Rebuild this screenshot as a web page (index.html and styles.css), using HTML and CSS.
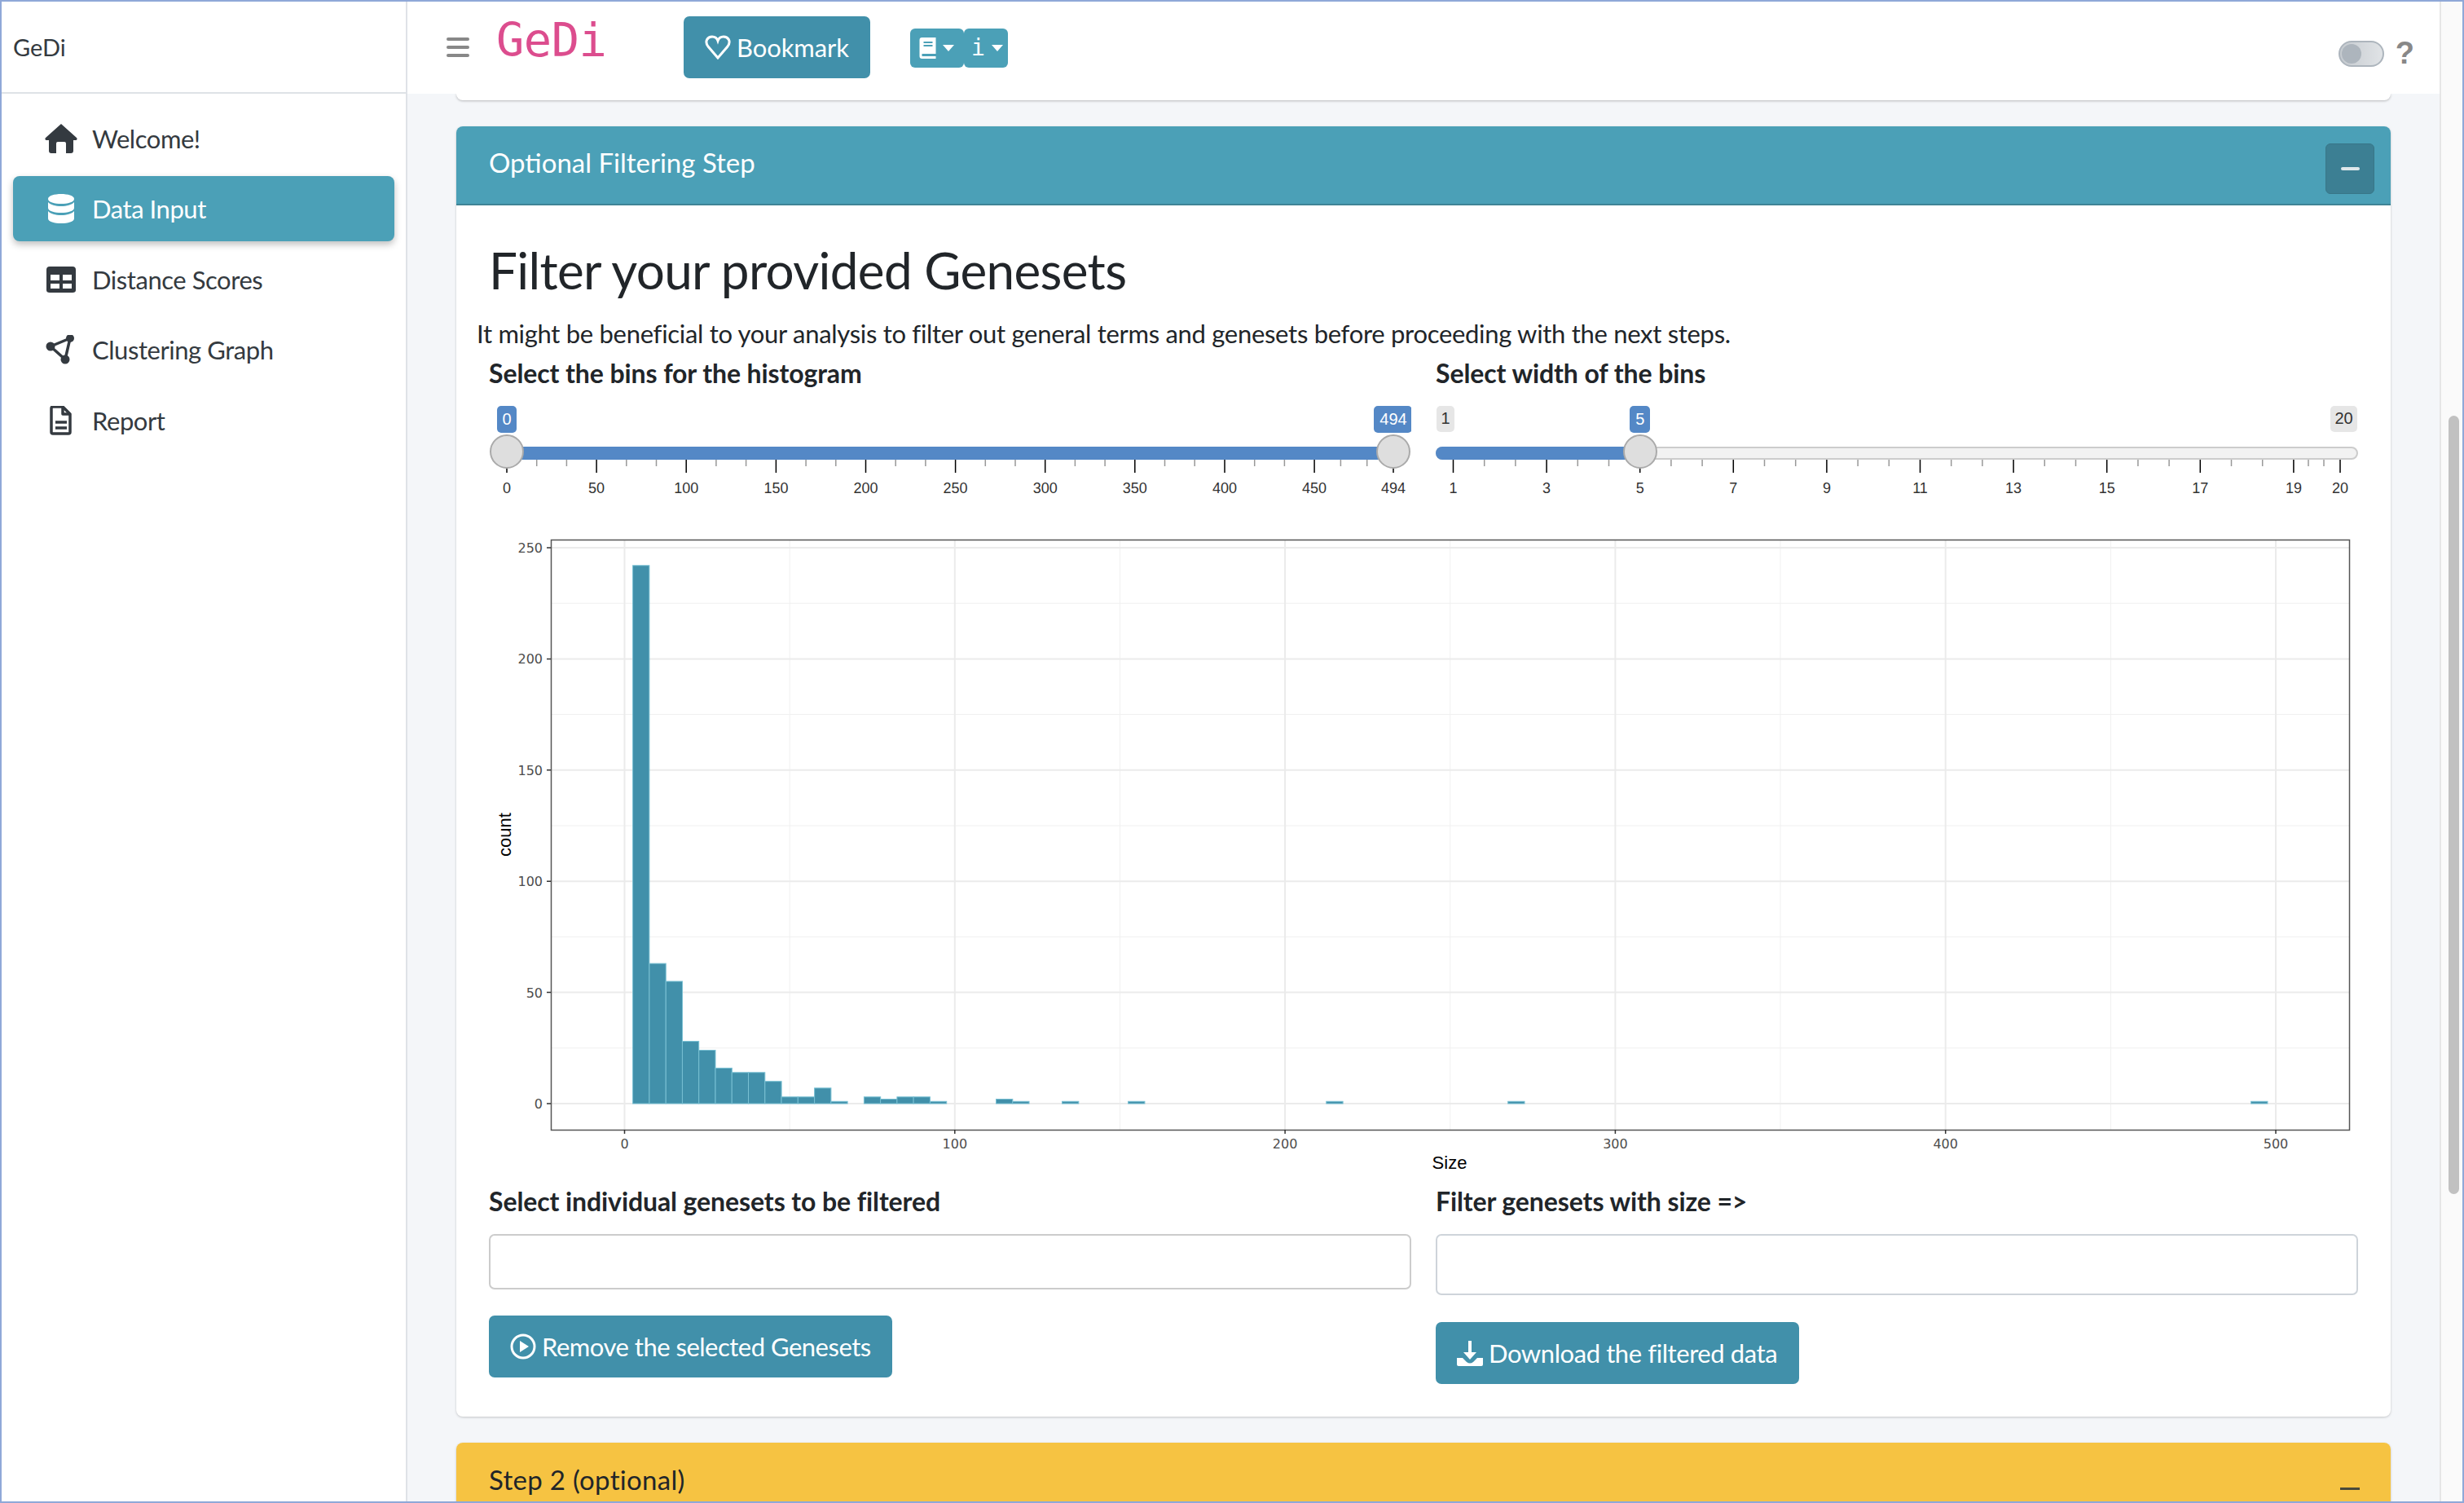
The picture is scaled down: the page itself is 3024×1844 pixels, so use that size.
FILE: index.html
```html
<!DOCTYPE html>
<html lang="en">
<head>
  <meta charset="UTF-8">
  <title>GeDi</title>
  <link rel="stylesheet" href="styles.css">
</head>
<body>
  <div class="window">
    <aside class="sidebar">
      <div class="brand">GeDi</div>
      <nav class="menu">
        <a class="menu-item">
          <svg class="menu-icon" viewBox="0 0 40 36"><path class="fill" d="M20 0 39 17q1.500 2-.5 3H35v13q0 3-3 3h-6V24q0-2-2-2h-8q-2 0-2 2v12H8q-3 0-3-3V20H1.500Q-.5 19 1 17z"/></svg>
          <span>Welcome!</span>
        </a>
        <a class="menu-item active">
          <svg class="menu-icon" viewBox="0 0 40 36"><path class="fill" d="M4 6C4 2 12 0 20 0s16 2 16 6-8 6-16 6S4 10 4 6zM4 10c3 3.500 9 5 16 5s13-1.500 16-5v7c0 4-8 6-16 6S4 21 4 17zM4 21c3 3.500 9 5 16 5s13-1.500 16-5v9c0 4-8 6-16 6s-16-2-16-6z"/></svg>
          <span>Data Input</span>
        </a>
        <a class="menu-item">
          <svg class="menu-icon" viewBox="0 0 40 36"><path class="fill" fill-rule="evenodd" d="M6 2h28q4 0 4 4v25q0 3-4 3H6q-4 0-4-3V6q0-4 4-4zM7 12v7h11v-7zM22 12v7h11v-7zM7 23v6h11v-6zM22 23v6h11v-6z"/></svg>
          <span>Distance Scores</span>
        </a>
        <a class="menu-item">
          <svg class="menu-icon" viewBox="0 0 40 36"><path class="line" d="M7 14 31 4 25 30z"/><circle class="fill" cx="7" cy="14" r="5.500"/><circle class="fill" cx="31" cy="4" r="5"/><circle class="fill" cx="25" cy="30" r="5.500"/></svg>
          <span>Clustering Graph</span>
        </a>
        <a class="menu-item">
          <svg class="menu-icon" viewBox="0 0 40 36"><path class="line" d="M10 1h12l9 9v22q0 2-2 2H10q-2 0-2-2V3q0-2 2-2z"/><path class="line" d="M22 1v9h9M13 20h14M13 27h14"/></svg>
          <span>Report</span>
        </a>
      </nav>
    </aside>

    <div class="main">
      <header class="navbar">
        <div class="burger"><i></i><i></i><i></i></div>
        <div class="logo">GeDi</div>
        <button class="btn bookmark">
          <svg class="btn-icon" viewBox="0 0 32 32"><path class="stroke-white" d="M16 29 4 15C-1 8 4 3 9 3c3 0 6 2 7 5 1-3 4-5 7-5 5 0 10 5 5 12z"/></svg>
          Bookmark
        </button>
        <div class="drop-group">
          <div class="drop-btn">
            <svg class="book-icon" viewBox="0 0 20 26"><path class="white" fill-rule="evenodd" d="M3 0h17v20H3v3h17v3H3q-3 0-3-3V3q0-3 3-3zM5 5v2h11V5zM5 9v2h11V9z"/></svg>
            <b class="caret"></b>
          </div>
          <div class="drop-btn second">
            <span class="info">i</span>
            <b class="caret"></b>
          </div>
        </div>
        <div class="nav-right">
          <div class="toggle"><i></i></div>
          <span class="question">?</span>
        </div>
      </header>

      <div class="content">
        <div class="prev-card"></div>

        <section class="card">
          <div class="card-head">
            <span>Optional Filtering Step</span>
            <div class="collapse-btn"><i></i></div>
          </div>
          <div class="card-body">
            <h2>Filter your provided Genesets</h2>
            <p class="intro">It might be beneficial to your analysis to filter out general terms and genesets before proceeding with the next steps.</p>

            <div class="two-col">
              <div>
                <label>Select the bins for the histogram</label>
                <svg class="slider" width="1132" height="138" viewBox="0 0 1132 138">
                  <rect class="track-fill" x="22" y="66" width="1088" height="16"/>
                  <path class="tick-minor" d="M58.700 82v8M95.400 82v8M168.800 82v8M205.500 82v8M278.900 82v8M315.600 82v8M389.100 82v8M425.800 82v8M499.200 82v8M535.900 82v8M609.300 82v8M646 82v8M719.400 82v8M756.100 82v8M829.500 82v8M866.200 82v8M939.700 82v8M976.400 82v8M1045.400 82v8M1077.700 82v8"/>
                  <path class="tick-major" d="M22 82v16M132.100 82v16M242.200 82v16M352.400 82v16M462.500 82v16M572.600 82v16M682.700 82v16M792.800 82v16M903 82v16M1013.100 82v16M1110 82v16"/>
                  <g class="tick-label">
                    <text x="22" y="123">0</text><text x="132.100" y="123">50</text><text x="242.200" y="123">100</text><text x="352.400" y="123">150</text><text x="462.500" y="123">200</text><text x="572.600" y="123">250</text><text x="682.700" y="123">300</text><text x="792.800" y="123">350</text><text x="903" y="123">400</text><text x="1013.100" y="123">450</text><text x="1110" y="123">494</text>
                  </g>
                  <rect class="bubble" x="10" y="16" width="24" height="33" rx="5"/>
                  <text class="bubble-text" x="22" y="39">0</text>
                  <rect class="bubble" x="1086" y="16" width="47" height="33" rx="5"/>
                  <text class="bubble-text" x="1110" y="39">494</text>
                  <circle class="handle" cx="22" cy="72" r="20"/>
                  <circle class="handle" cx="1110" cy="72" r="20"/>
                </svg>
              </div>
              <div>
                <label>Select width of the bins</label>
                <svg class="slider" width="1132" height="138" viewBox="0 0 1132 138">
                  <rect class="track-bg" x="1" y="67" width="1130" height="14" rx="7"/>
                  <rect class="track-fill" x="0" y="66" width="251" height="16" rx="8"/>
                  <path class="tick-minor" d="M59.700 82v8M97.900 82v8M174.300 82v8M212.500 82v8M288.900 82v8M327.100 82v8M403.500 82v8M441.700 82v8M518.100 82v8M556.300 82v8M632.700 82v8M670.900 82v8M747.300 82v8M785.500 82v8M861.900 82v8M900.100 82v8M976.500 82v8M1014.700 82v8M1071 82v8M1090 82v8"/>
                  <path class="tick-major" d="M21.500 82v16M136.100 82v16M250.700 82v16M365.300 82v16M479.900 82v16M594.500 82v16M709.100 82v16M823.700 82v16M938.300 82v16M1052.900 82v16M1110 82v16"/>
                  <g class="tick-label">
                    <text x="21.500" y="123">1</text><text x="136.100" y="123">3</text><text x="250.700" y="123">5</text><text x="365.300" y="123">7</text><text x="479.900" y="123">9</text><text x="594.500" y="123">11</text><text x="709.100" y="123">13</text><text x="823.700" y="123">15</text><text x="938.300" y="123">17</text><text x="1052.900" y="123">19</text><text x="1110" y="123">20</text>
                  </g>
                  <rect class="bubble-min" x="1" y="16" width="22" height="32" rx="5"/>
                  <text class="bubble-min-text" x="12" y="38">1</text>
                  <rect class="bubble-min" x="1098" y="16" width="33" height="32" rx="5"/>
                  <text class="bubble-min-text" x="1114.500" y="38">20</text>
                  <rect class="bubble" x="238" y="16" width="25" height="33" rx="5"/>
                  <text class="bubble-text" x="250.700" y="39">5</text>
                  <circle class="handle" cx="251" cy="72" r="20"/>
                </svg>
              </div>
            </div>

            <svg class="chart" width="2294" height="800" viewBox="0 0 2294 800">
              <path class="grid-minor" d="M76 645.800H2283M76 509.400H2283M76 373H2283M76 236.600H2283M76 100.200H2283M369.200 22V746M774.500 22V746M1179.800 22V746M1585 22V746M1990.400 22V746"/>
              <path class="grid-major" d="M76 714H2283M76 577.600H2283M76 441.200H2283M76 304.800H2283M76 168.400H2283M76 32H2283M166.500 22V746M571.800 22V746M977.100 22V746M1382.400 22V746M1787.700 22V746M2193 22V746"/>
              <g class="bars">
                <rect x="176.600" y="53.800" width="20.300" height="660.200"/>
                <rect x="196.900" y="542.100" width="20.300" height="171.900"/>
                <rect x="217.200" y="564" width="20.300" height="150"/>
                <rect x="237.400" y="637.600" width="20.300" height="76.400"/>
                <rect x="257.700" y="648.500" width="20.300" height="65.500"/>
                <rect x="278" y="670.400" width="20.300" height="43.600"/>
                <rect x="298.200" y="675.800" width="20.300" height="38.200"/>
                <rect x="318.500" y="675.800" width="20.300" height="38.200"/>
                <rect x="338.800" y="686.700" width="20.300" height="27.300"/>
                <rect x="359" y="705.800" width="20.300" height="8.200"/>
                <rect x="379.300" y="705.800" width="20.300" height="8.200"/>
                <rect x="399.600" y="694.900" width="20.300" height="19.100"/>
                <rect x="419.800" y="711.300" width="20.300" height="2.700"/>
                <rect x="460.400" y="705.800" width="20.300" height="8.200"/>
                <rect x="480.600" y="708.500" width="20.300" height="5.500"/>
                <rect x="500.900" y="705.800" width="20.300" height="8.200"/>
                <rect x="521.100" y="705.800" width="20.300" height="8.200"/>
                <rect x="541.400" y="711.300" width="20.300" height="2.700"/>
                <rect x="622.500" y="708.500" width="20.300" height="5.500"/>
                <rect x="642.700" y="711.300" width="20.300" height="2.700"/>
                <rect x="703.500" y="711.300" width="20.300" height="2.700"/>
                <rect x="784.600" y="711.300" width="20.300" height="2.700"/>
                <rect x="1027.800" y="711.300" width="20.300" height="2.700"/>
                <rect x="1250.700" y="711.300" width="20.300" height="2.700"/>
                <rect x="2162.600" y="711.300" width="20.300" height="2.700"/>
              </g>
              <rect class="panel" x="76.500" y="22.500" width="2207" height="724"/>
              <path class="axis-tick" d="M71 714h5M71 577.600h5M71 441.200h5M71 304.800h5M71 168.400h5M71 32h5M166.500 746v5M571.800 746v5M977.100 746v5M1382.400 746v5M1787.700 746v5M2193 746v5"/>
              <g class="y-label">
                <text x="66" y="720">0</text><text x="66" y="584">50</text><text x="66" y="447">100</text><text x="66" y="311">150</text><text x="66" y="174">200</text><text x="66" y="38">250</text>
              </g>
              <g class="x-label">
                <text x="166.500" y="769">0</text><text x="571.800" y="769">100</text><text x="977.100" y="769">200</text><text x="1382.400" y="769">300</text><text x="1787.700" y="769">400</text><text x="2193" y="769">500</text>
              </g>
              <text class="axis-title" x="1179" y="794">Size</text>
              <text class="axis-title" transform="translate(27 384) rotate(-90)">count</text>
            </svg>

            <div class="two-col fields">
              <div>
                <label>Select individual genesets to be filtered</label>
                <input class="text-input left-input" type="text">
                <button class="btn remove">
                  <svg class="btn-icon" viewBox="0 0 32 32"><circle class="stroke-white" cx="16" cy="16" r="14"/><path class="white" d="M12 9l11 7-11 7z"/></svg>
                  Remove the selected Genesets
                </button>
              </div>
              <div>
                <label>Filter genesets with size =&gt;</label>
                <input class="text-input right-input" type="text">
                <button class="btn download">
                  <svg class="btn-icon" viewBox="0 0 32 32"><path class="white" d="M14 1h4v14h6l-8 9-8-9h6zM0 22h7l5 5q4 3 8 0l5-5h7v8q0 2-2 2H2q-2 0-2-2z"/></svg>
                  Download the filtered data
                </button>
              </div>
            </div>
          </div>
        </section>

        <section class="card yellow">
          <div class="card-head">
            <span>Step 2 (optional)</span>
            <div class="collapse-plain"></div>
          </div>
        </section>
      </div>
    </div>

    <div class="scrollbar"><div class="thumb"></div></div>
  </div>
</body>
</html>
```
FILE: styles.css
```css
* {
  box-sizing: border-box;
}
html, body {
  margin: 0;
  height: 100%;
  overflow: hidden;
}
body {
  font-family: "Lato", "Noto Sans", sans-serif;
  font-size: 31px;
  color: #212529;
  background: #fff;
}
.window {
  display: flex;
  width: 3024px;
  height: 1844px;
  border: 2px solid #8fa8d8;
  overflow: hidden;
}

/* sidebar */
.sidebar {
  width: 498px;
  flex: none;
  background: #fff;
  border-right: 2px solid #dfe2e7;
}
.brand {
  height: 113px;
  border-bottom: 2px solid #dee2e6;
  padding-left: 14px;
  line-height: 112px;
  font-size: 29px;
  color: #343a40;
}
.menu {
  display: flex;
  flex-direction: column;
  gap: 6.5px;
  padding: 14.5px 14px 0;
}
.menu-item {
  display: flex;
  align-items: center;
  gap: 18px;
  height: 80px;
  padding-left: 39px;
  border-radius: 8px;
  color: #343a40;
  letter-spacing: -.45px;
}
.menu-item .fill {
  fill: #343a40;
}
.menu-item .line {
  fill: none;
  stroke: #343a40;
  stroke-width: 3.5;
  stroke-linejoin: round;
}
.menu-item.active {
  background: #4ba0b7;
  color: #fff;
  box-shadow: 0 4px 8px rgba(0, 0, 0, .25);
}
.menu-item.active .fill {
  fill: #fff;
}
.menu-icon {
  width: 40px;
  height: 36px;
  flex: none;
}

/* top bar */
.main {
  flex: 1;
  min-width: 0;
  display: flex;
  flex-direction: column;
  background: #f4f6f9;
  border-right: 2px solid #e6e6e6;
}
.navbar {
  display: flex;
  align-items: center;
  height: 113px;
  flex: none;
  padding-left: 48px;
  background: #fff;
}
.burger {
  display: flex;
  flex-direction: column;
  gap: 6px;
  width: 28px;
  margin-right: 33px;
  margin-bottom: 2px;
}
.burger i {
  height: 4px;
  border-radius: 2px;
  background: #888;
}
.logo {
  width: 230px;
  margin-bottom: 20px;
  font-family: "DejaVu Sans Mono", monospace;
  font-size: 57px;
  letter-spacing: -.5px;
  color: #dc4d8e;
}
.btn {
  display: inline-flex;
  align-items: center;
  gap: 7px;
  height: 76px;
  border: none;
  border-radius: 7px;
  background: #4190aa;
  color: #fff;
  font: inherit;
}
.btn-icon {
  width: 32px;
  height: 32px;
  flex: none;
}
.white {
  fill: #fff;
}
.stroke-white {
  fill: none;
  stroke: #fff;
  stroke-width: 3;
}
.bookmark {
  width: 229px;
  padding: 0 0 0 26px;
  margin-bottom: 2px;
  letter-spacing: -.1px;
}
.drop-group {
  display: flex;
  margin-left: 49px;
}
.drop-btn {
  display: flex;
  align-items: center;
  gap: 8px;
  width: 66px;
  height: 48px;
  padding-left: 11px;
  border-radius: 6px;
  background: #4ba0b7;
}
.drop-btn.second {
  width: 54px;
  padding-left: 9px;
}
.book-icon {
  width: 21px;
  height: 26px;
}
.info {
  font-family: "DejaVu Sans Mono", monospace;
  font-size: 28px;
  color: #fff;
}
.caret {
  width: 0;
  height: 0;
  border-left: 7px solid transparent;
  border-right: 7px solid transparent;
  border-top: 8px solid #fff;
}
.nav-right {
  display: flex;
  align-items: center;
  gap: 14px;
  margin-left: auto;
  margin-right: 31px;
  margin-top: 14px;
}
.toggle {
  width: 56px;
  height: 32px;
  padding: 2px;
  border: 2px solid #adb5bd;
  border-radius: 16px;
  background: linear-gradient(90deg, #c6cbd0, #e0e3e6);
}
.toggle i {
  display: block;
  width: 24px;
  height: 24px;
  border-radius: 50%;
  background: #adb5bd;
}
.question {
  font-family: "Liberation Sans", sans-serif;
  font-size: 38px;
  font-weight: bold;
  color: #888;
}

/* content */
.content {
  flex: 1;
  min-height: 0;
  padding: 0 60px;
  overflow: hidden;
}
.prev-card {
  height: 8px;
  background: #fff;
  border-radius: 0 0 8px 8px;
  box-shadow: 0 1px 3px rgba(0, 0, 0, .25);
}
.card {
  margin-top: 32px;
  background: #fff;
  border-radius: 8px;
  box-shadow: 0 1px 3px rgba(0, 0, 0, .2);
}
.card-head {
  display: flex;
  align-items: center;
  justify-content: space-between;
  height: 97px;
  padding: 0 20px 0 40px;
  background: #4ba0b7;
  border-bottom: 2px solid #3f8496;
  border-radius: 8px 8px 0 0;
  color: #fff;
  font-size: 33px;
}
.card-head span {
  margin-bottom: 8px;
}
.collapse-btn {
  display: flex;
  align-items: center;
  justify-content: center;
  width: 60px;
  height: 62px;
  margin-top: 8px;
  border: 1px solid #387688;
  border-radius: 6px;
  background: #3c7f93;
}
.collapse-btn i {
  width: 23px;
  height: 4px;
  border-radius: 2px;
  background: #dfe8eb;
}
.card-body {
  padding: 41px 40px 40px;
}
h2 {
  margin: 0;
  height: 77px;
  font-size: 62px;
  line-height: 77px;
  font-weight: 400;
  letter-spacing: -.66px;
}
.intro {
  margin: 16px 0 0 -15px;
  height: 48px;
  line-height: 46px;
  letter-spacing: -.3px;
}
.two-col {
  display: grid;
  grid-template-columns: 1132px 1132px;
  gap: 30px;
}
label {
  display: block;
  height: 48px;
  line-height: 47px;
  font-size: 32px;
  font-weight: 700;
  letter-spacing: -.1px;
}

/* sliders */
.slider {
  display: block;
}
.track-fill {
  fill: #5488c6;
}
.track-bg {
  fill: #f2f2f2;
  stroke: #ccc;
  stroke-width: 2;
}
.tick-major {
  stroke: #000;
  stroke-width: 1.500;
}
.tick-minor {
  stroke: #999;
  stroke-width: 1.500;
}
.tick-label text {
  font-family: "Liberation Sans", sans-serif;
  font-size: 18px;
  fill: #333;
  text-anchor: middle;
}
.bubble {
  fill: #5488c6;
}
.bubble-text {
  font-family: "Liberation Sans", sans-serif;
  font-size: 20px;
  fill: #fff;
  text-anchor: middle;
}
.bubble-min {
  fill: #e6e6e6;
}
.bubble-min-text {
  font-family: "Liberation Sans", sans-serif;
  font-size: 20px;
  fill: #333;
  text-anchor: middle;
}
.handle {
  fill: #dedede;
  stroke: #aaa;
  stroke-width: 2;
}

/* histogram */
.chart {
  display: block;
  margin-top: 20px;
}
.grid-major {
  fill: none;
  stroke: #ebebeb;
  stroke-width: 2;
}
.grid-minor {
  fill: none;
  stroke: #f0f0f0;
  stroke-width: 1;
}
.bars rect {
  fill: #4190aa;
  stroke: #79c0d3;
  stroke-width: 1;
}
.panel {
  fill: none;
  stroke: #555;
  stroke-width: 1.500;
}
.axis-tick {
  stroke: #333;
  stroke-width: 1.500;
}
.y-label text {
  font-family: "DejaVu Sans", sans-serif;
  font-size: 16px;
  fill: #4d4d4d;
  text-anchor: end;
}
.x-label text {
  font-family: "DejaVu Sans", sans-serif;
  font-size: 16px;
  fill: #4d4d4d;
  text-anchor: middle;
}
.axis-title {
  font-family: "Liberation Sans", sans-serif;
  font-size: 22px;
  fill: #000;
  text-anchor: middle;
}

/* fields */
.fields {
  margin-top: 10px;
}
.text-input {
  display: block;
  width: 100%;
  margin-top: 16px;
  border: 2px solid #ccc;
  border-radius: 7px;
  background: #fff;
}
.left-input {
  height: 68px;
}
.right-input {
  height: 75px;
  border-color: #ced4da;
}
.fields .btn {
  margin-top: 32px;
}
.fields .download {
  margin-top: 33px;
}
.remove {
  width: 495px;
  padding: 0 0 0 26px;
  letter-spacing: -.5px;
}
.download {
  width: 446px;
  padding: 0 0 0 26px;
  letter-spacing: -.42px;
}

/* next box */
.card.yellow .card-head {
  background: #f6c342;
  border-bottom: none;
  color: #212529;
  padding-right: 38px;
  letter-spacing: .3px;
}
.collapse-plain {
  width: 24px;
  height: 3px;
  margin-top: 16px;
  background: #4a4a3a;
}

/* scrollbar */
.scrollbar {
  width: 26px;
  flex: none;
  background: #fafafa;
  padding: 508px 4px 0 9px;
}
.thumb {
  height: 955px;
  border-radius: 7px;
  background: #c1c1c1;
}
```
